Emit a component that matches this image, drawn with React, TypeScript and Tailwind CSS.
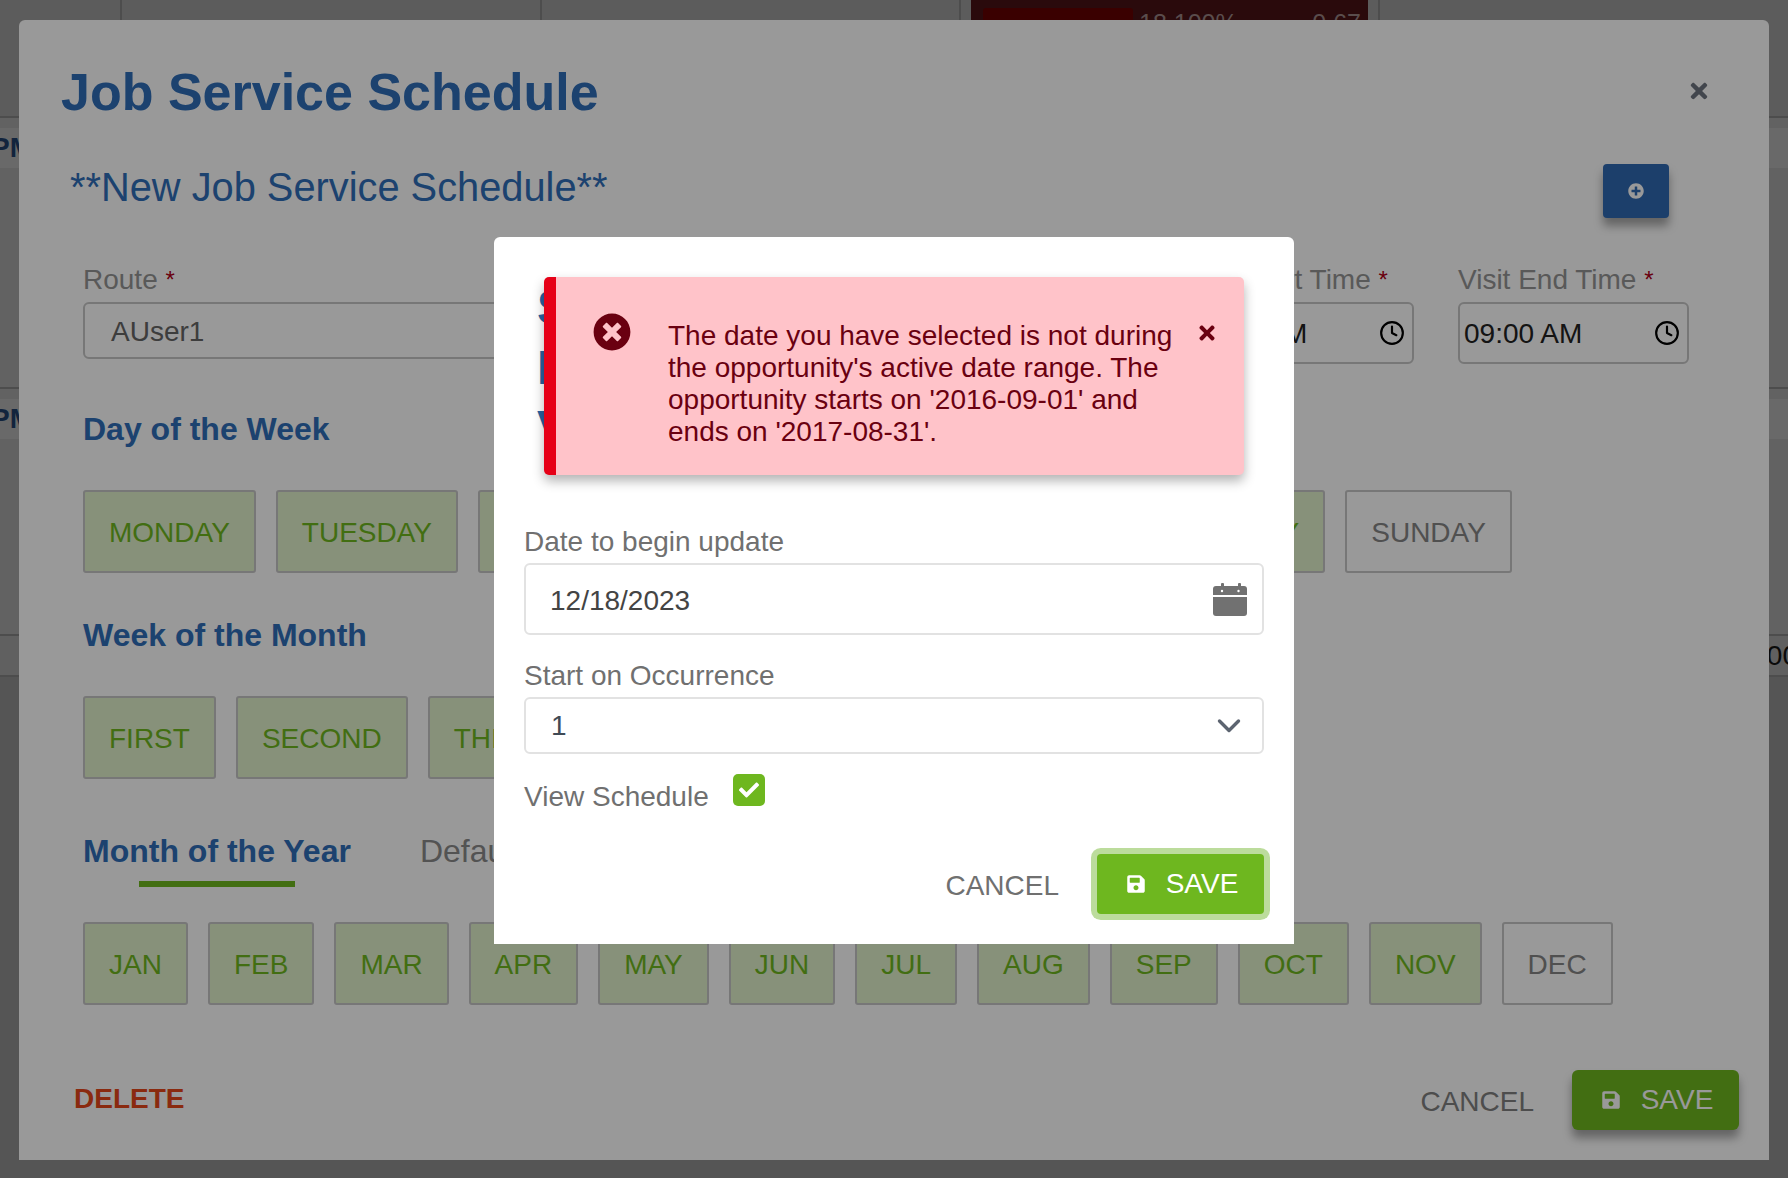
import React from "react";
import { FaTimes, FaTimesCircle, FaSave, FaPlusCircle, FaCheck } from "react-icons/fa";
import { Clock } from "lucide-react";

const font = { fontFamily: '"Liberation Sans", Arial, sans-serif' };

function Toggle({ label, on = true }: { label: string; on?: boolean }) {
  return (
    <div
      className={
        on
          ? "h-full flex items-center pt-[2px] px-[24px] border-2 border-[#c6c6c6] rounded-[3px] bg-[#e1f2cb] text-[#6eb71f] text-[28px] shrink-0"
          : "h-full flex items-center pt-[2px] px-[24px] border-2 border-[#c6c6c6] rounded-[3px] text-[#858585] text-[28px] shrink-0"
      }
    >
      {label}
    </div>
  );
}

function Req({ children }: { children: React.ReactNode }) {
  return (
    <div className="h-[28px] leading-[28px] text-[28px] text-[#949494] mb-[8px] whitespace-nowrap">
      {children} <span className="text-[#b00018] text-[24px] align-top">*</span>
    </div>
  );
}

function TimeField({ label, value }: { label: string; value: string }) {
  return (
    <div className="w-[231px] shrink-0">
      <Req>{label}</Req>
      <div className="h-[62px] border-2 border-[#c6c6c6] rounded-[6px] flex items-center justify-between pl-[4px] pr-[7px]">
        <span className="text-[28px] leading-[32px] pt-[2px] text-[#222]">{value}</span>
        <Clock size={26} color="#000" strokeWidth={2} />
      </div>
    </div>
  );
}

function Calendar() {
  return (
    <svg width="34" height="33" viewBox="0 0 34 33" fill="#717171">
      <rect x="8" y="0" width="3" height="6" rx="1" />
      <rect x="25" y="0" width="3" height="6" rx="1" />
      <path d="M3 3h28a3 3 0 0 1 3 3v6H0V6a3 3 0 0 1 3-3z" />
      <path d="M0 14h34v16a3 3 0 0 1-3 3H3a3 3 0 0 1-3-3z" />
      <circle cx="9" cy="8" r="1.2" fill="#fff" />
      <circle cx="25.5" cy="8" r="1.2" fill="#fff" />
    </svg>
  );
}

function Chevron() {
  return (
    <svg width="24" height="16" viewBox="0 0 24 16" fill="none" stroke="#5c6470" strokeWidth="3.4" strokeLinecap="round" strokeLinejoin="round">
      <path d="M2.5 3 L12 12.5 L21.5 3" />
    </svg>
  );
}

function Pm() {
  return (
    <div className="pt-[10px] flex justify-between h-full">
      <div className="h-[40px] w-[40px] bg-[#b0b0b0] text-[#1f3d66] text-[28px] leading-[40px] font-bold whitespace-nowrap overflow-hidden">
        <span className="block -ml-[9px]">PM</span>
      </div>
      <div className="h-[40px] w-[40px] bg-[#b0b0b0] rounded-l-[8px]" />
    </div>
  );
}

export default function App() {
  const days = ["MONDAY", "TUESDAY", "WEDNESDAY", "THURSDAY", "FRIDAY", "SATURDAY"];
  const weeks = ["FIRST", "SECOND", "THIRD", "FOURTH", "LAST"];
  const months = ["JAN", "FEB", "MAR", "APR", "MAY", "JUN", "JUL", "AUG", "SEP", "OCT", "NOV"];
  return (
    <div className="relative w-full h-[1178px] overflow-hidden bg-[#8e8e8e]" style={font}>
      {/* page behind the dialogs */}
      <div className="h-[118px] bg-[#999999] border-b-2 border-[#808080] flex">
        <div className="w-[122px] border-r-2 border-[#808080]" />
        <div className="w-[420px] border-r-2 border-[#808080]" />
        <div className="w-[419px] border-r-2 border-[#808080]" />
        <div className="w-[419px] border-r-2 border-[#808080] px-[10px]">
          <div className="h-full bg-[#461114] flex items-start gap-[6px] pt-[8px] px-[12px] pr-[7px] text-[#968080] text-[25px] leading-[30px]">
            <div className="w-[150px] h-[24px] bg-[#620000] rounded-[3px] shrink-0" />
            <span className="flex-1">18.100%</span>
            <span>0.67</span>
          </div>
        </div>
      </div>
      <div className="h-[271px] bg-[#a3a3a3] border-b-2 border-[#808080]">
        <Pm />
      </div>
      <div className="h-[247px] bg-[#a3a3a3] border-b-2 border-[#808080]">
        <Pm />
      </div>
      <div className="h-[41px] bg-[#a0a0a0] border-b-2 border-[#808080] flex justify-end items-center text-[#111] text-[28px] overflow-hidden">
        <span className="-mr-[10px]">00</span>
      </div>

      {/* job service schedule modal */}
      <div className="absolute left-[19px] top-[20px] w-[1750px] h-[1140px] bg-white rounded-t-[6px] pl-[64px] pr-[80px]">
        <div className="mt-[42px] h-[60px] -ml-[22px] text-[52px] leading-[60px] font-bold text-[#2f6eb9]">Job Service Schedule</div>
        <div className="absolute right-[58px] top-[59px] text-[#6f7680] text-[24px]">
          <FaTimes />
        </div>
        <div className="flex justify-between items-start mt-[42px] h-[54px] -ml-[13px] pr-[20px]">
          <div className="text-[39.8px] leading-[46px] text-[#2f6eb9]">**New Job Service Schedule**</div>
          <div className="w-[66px] h-[54px] bg-[#2f69b2] rounded-[4px] shadow-[0_8px_10px_rgba(0,0,0,0.35)] flex items-center justify-center text-white text-[16px]">
            <FaPlusCircle />
          </div>
        </div>

        <div className="flex gap-[44px] mt-[48px] h-[98px]">
          <div className="flex-1">
            <Req>Route</Req>
            <div className="h-[57px] border-2 border-[#c6c6c6] rounded-[6px] flex items-center pl-[26px] pt-[2px] text-[28px] text-[#666]">
              AUser1
            </div>
          </div>
          <TimeField label="Visit Start Time" value="08:00 AM" />
          <TimeField label="Visit End Time" value="09:00 AM" />
        </div>

        <div className="mt-[45px] h-[40px] leading-[40px] text-[32px] font-bold text-[#2f6eb9]">Day of the Week</div>
        <div className="flex gap-[20px] mt-[41px] h-[83px]">
          {days.map((d) => (
            <Toggle key={d} label={d} />
          ))}
          <Toggle label="SUNDAY" on={false} />
        </div>

        <div className="mt-[42px] h-[40px] leading-[40px] text-[32px] font-bold text-[#2f6eb9]">Week of the Month</div>
        <div className="flex gap-[20px] mt-[41px] h-[83px]">
          {weeks.map((d) => (
            <Toggle key={d} label={d} />
          ))}
        </div>

        <div className="flex gap-[69px] mt-[52px] h-[56px]">
          <div className="flex flex-col items-center">
            <div className="h-[40px] leading-[40px] text-[32px] font-bold text-[#2f6eb9]">Month of the Year</div>
            <div className="h-[6px] w-[156px] mt-[10px] bg-[#6eb71f]" />
          </div>
          <div className="h-[40px] leading-[40px] text-[32px] text-[#8a8a8a]">Default</div>
        </div>
        <div className="flex gap-[20px] mt-[35px] h-[83px]">
          {months.map((d) => (
            <Toggle key={d} label={d} />
          ))}
          <Toggle label="DEC" on={false} />
        </div>

        <div className="flex items-start justify-between mt-[65px] h-[60px] -ml-[9px] -mr-[50px]">
          <div className="text-[28px] font-bold text-[#e6461a] leading-[32px] mt-[13px]">DELETE</div>
          <div className="flex items-start gap-[38px]">
            <div className="text-[#808080] text-[28px] leading-[32px] mt-[16px]">CANCEL</div>
            <div className="w-[167px] h-[60px] rounded-[6px] bg-[#6eb71f] shadow-[0_8px_10px_rgba(0,0,0,0.35)] text-white flex items-center justify-center gap-[20px] pl-[3px] text-[28px]">
              <FaSave className="text-[20px]" />
              <span>SAVE</span>
            </div>
          </div>
        </div>
      </div>

      <div className="absolute inset-0 bg-black/40" />

      {/* confirm dialog */}
      <div className="absolute left-[494px] top-[237px] w-[800px] h-[707px] bg-white rounded-t-[6px] pl-[30px] pr-[30px] pt-[41px]">
        <div className="h-[249px] pl-[13px] text-[48px] leading-[60px] font-bold text-[#2a62a0]">
          <div>Select</div>
          <div>Begin</div>
          <div>View</div>
        </div>
        <div className="absolute left-[50px] top-[40px] w-[700px] h-[198px] bg-[#ffc3c9] border-l-[12px] border-[#e60017] rounded-[5px] shadow-[0_6px_12px_rgba(0,0,0,0.3)] flex items-start text-[#6a0010]">
          <div className="w-[38px] h-[38px] ml-[37px] mt-[36px] shrink-0 text-[38px] leading-none">
            <FaTimesCircle />
          </div>
          <div className="w-[510px] ml-[37px] mt-[43px] text-[28px] leading-[32px] shrink-0">
            The date you have selected is not during the opportunity's active date range. The opportunity starts on '2016-09-01' and ends on '2017-08-31'.
          </div>
          <div className="ml-[18px] mt-[45px] text-[22px]">
            <FaTimes />
          </div>
        </div>

        <div className="h-[28px] leading-[28px] pt-[1px] text-[28px] text-[#707070] mb-[8px]">Date to begin update</div>
        <div className="h-[72px] border-2 border-[#e2e2e2] rounded-[6px] flex items-center justify-between pl-[24px] pr-[15px] text-[28px] text-[#444]">
          <span className="pt-[3px]">12/18/2023</span>
          <Calendar />
        </div>
        <div className="mt-[26px] h-[28px] leading-[28px] pt-[1px] text-[28px] text-[#707070] mb-[8px]">Start on Occurrence</div>
        <div className="h-[57px] border-2 border-[#e2e2e2] rounded-[6px] flex items-center justify-between pl-[25px] pr-[21px] text-[28px] text-[#3f4a55]">
          <span>1</span>
          <Chevron />
        </div>
        <div className="flex items-start mt-[20px] h-[36px]">
          <div className="h-[28px] leading-[28px] mt-[9px] text-[28px] text-[#707070]">View Schedule</div>
          <div className="w-[32px] h-[32px] ml-[24px] bg-[#6eb71f] rounded-[5px] flex items-center justify-center text-white text-[20px]">
            <FaCheck />
          </div>
        </div>
        <div className="flex justify-end items-start gap-[38px] mt-[44px]">
          <div className="text-[#707070] text-[28px] leading-[32px] mt-[16px]">CANCEL</div>
          <div className="w-[167px] h-[60px] rounded-[4px] bg-[#6eb71f] ring-[6px] ring-[#bcdc9c] text-white flex items-center justify-center gap-[20px] pl-[3px] text-[28px]">
            <FaSave className="text-[20px]" />
            <span>SAVE</span>
          </div>
        </div>
      </div>
    </div>
  );
}
